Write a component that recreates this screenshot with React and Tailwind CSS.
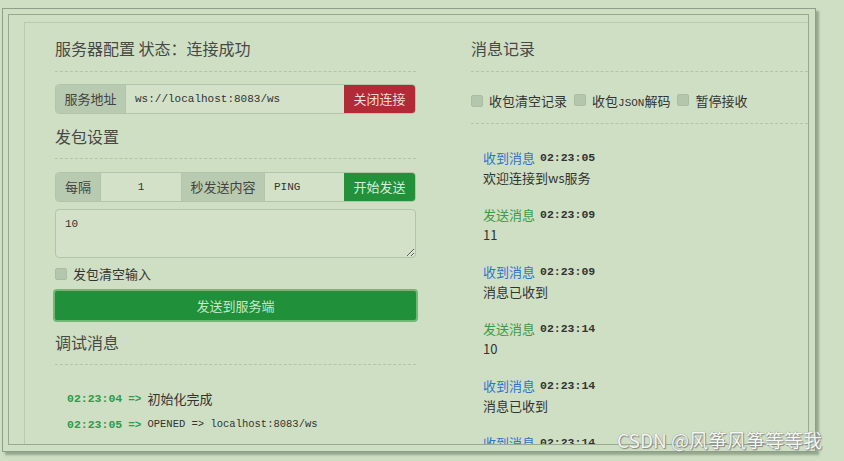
import React from "react";

const cjk = "font-['Noto_Sans_CJK_SC',sans-serif]";
const mono = "font-['Liberation_Mono','Noto_Sans_CJK_SC',monospace]";

function Box() {
  return <span className="inline-block w-[12px] h-[12px] rounded-[2px] bg-[#b4c7ad] border border-[#a9bda2]" />;
}

const messages = [
  { type: "recv", time: "02:23:05", text: "欢迎连接到ws服务" },
  { type: "send", time: "02:23:09", text: "11" },
  { type: "recv", time: "02:23:09", text: "消息已收到" },
  { type: "send", time: "02:23:14", text: "10" },
  { type: "recv", time: "02:23:14", text: "消息已收到" },
  { type: "recv", time: "02:23:14", text: "消息已收到" },
];

export default function App() {
  return (
    <div className={`relative w-[844px] h-[461px] overflow-hidden bg-[#cfdfc4] text-[#3a3a3a] ${cjk}`}>
      <div className="ml-[2px] mt-[8px] w-[814px] h-[444px] border border-[#8d9e89] shadow-[3px_3px_2px_rgba(110,130,105,0.6)] pt-[5px] pl-[5px] pr-[6px] pb-[6px]">
        <div className="h-full border border-[#97a993] pt-[7px] pl-[15px] flex flex-col">
          <div className="flex-1 min-h-0 border-l border-t border-[#b8caaf] flex pl-[30px] overflow-hidden">
            {/* Left column */}
            <div className="w-[361px] shrink-0 pt-[14px] flex flex-col">
              <div className="h-[22px] leading-[22px] text-[16px] text-[#484848]">服务器配置 状态：连接成功</div>
              <div className="mt-[12px] border-t border-dashed border-[#b3c4ab]" />
              <div className="mt-[12px] h-[30px] flex rounded-[4px] border border-[#b2c4aa] overflow-hidden">
                <div className="w-[70px] bg-[#b8cab0] border-r border-[#b2c4aa] flex items-center justify-center text-[13px] text-[#444]">服务地址</div>
                <div className={`flex-1 flex items-center pl-[9px] text-[11px] text-[#333] bg-[#d2e1c8] ${mono}`}>ws://localhost:8083/ws</div>
                <div className="w-[71px] bg-[#b32a37] flex items-center justify-center text-[13px] text-[#f4d9da]">关闭连接</div>
              </div>
              <div className="mt-[11px] h-[22px] leading-[22px] text-[16px] text-[#484848]">发包设置</div>
              <div className="mt-[11px] border-t border-dashed border-[#b3c4ab]" />
              <div className="mt-[13px] h-[30px] flex rounded-[4px] border border-[#b2c4aa] overflow-hidden">
                <div className="w-[45px] bg-[#b8cab0] border-r border-[#b2c4aa] flex items-center justify-center text-[13px] text-[#444]">每隔</div>
                <div className={`w-[80px] flex items-center justify-center text-[11px] text-[#333] bg-[#d2e1c8] ${mono}`}>1</div>
                <div className="w-[84px] bg-[#b8cab0] border-x border-[#b2c4aa] flex items-center justify-center text-[13px] text-[#444]">秒发送内容</div>
                <div className={`flex-1 flex items-center pl-[9px] text-[11px] text-[#333] bg-[#d2e1c8] ${mono}`}>PING</div>
                <div className="w-[71px] bg-[#22913a] flex items-center justify-center text-[13px] text-[#d6efd8]">开始发送</div>
              </div>
              <textarea
                readOnly
                defaultValue="10"
                className={`mt-[7px] h-[49px] w-full rounded-[4px] border border-[#b2c4aa] bg-[#d2e1c8] px-[9px] py-[7px] text-[11px] leading-[14px] text-[#333] outline-none ${mono}`}
              />
              <div className="mt-[8px] h-[16px] flex items-center gap-[6px] text-[13px] text-[#333]">
                <Box />
                <span>发包清空输入</span>
              </div>
              <div className="mt-[7px] -mx-[2px] h-[33px] rounded-[4px] border-2 border-[#72b874] bg-[#20903a] flex items-center justify-center text-[13px] text-[#c9e7cb]">发送到服务端</div>
              <div className="mt-[9px] h-[22px] leading-[22px] text-[16px] text-[#484848]">调试消息</div>
              <div className="mt-[11px] border-t border-dashed border-[#b3c4ab]" />
              <div className="mt-[24px] pl-[12px] flex flex-col gap-[6px]">
                <div className="h-[20px] flex items-center gap-[6px]">
                  <span className={`text-[11.5px] font-bold text-[#2f9a4a] ${mono}`}>02:23:04</span>
                  <span className={`text-[11px] font-bold text-[#2f9a4a] ${mono}`}>=&gt;</span>
                  <span className="text-[13px] text-[#333]">初始化完成</span>
                </div>
                <div className="h-[20px] flex items-center gap-[6px]">
                  <span className={`text-[11.5px] font-bold text-[#2f9a4a] ${mono}`}>02:23:05</span>
                  <span className={`text-[11px] font-bold text-[#2f9a4a] ${mono}`}>=&gt;</span>
                  <span className={`text-[10.5px] text-[#333] ${mono}`}>OPENED =&gt; localhost:8083/ws</span>
                </div>
              </div>
            </div>

            {/* Right column */}
            <div className="ml-[55px] flex-1 min-w-0 pt-[14px] flex flex-col">
              <div className="h-[22px] leading-[22px] text-[16px] text-[#484848]">消息记录</div>
              <div className="mt-[12px] border-t border-dashed border-[#b3c4ab]" />
              <div className="mt-[21px] h-[16px] flex items-center text-[13px] text-[#333]">
                <Box />
                <span className="ml-[6px]">收包清空记录</span>
                <span className="ml-[7px]"><Box /></span>
                <span className="ml-[6px]">收包<span className={`text-[11px] ${mono}`}>JSON</span>解码</span>
                <span className="ml-[7px]"><Box /></span>
                <span className="ml-[6px]">暂停接收</span>
              </div>
              <div className="mt-[14px] border-t border-dashed border-[#b3c4ab]" />
              <div className="mt-[24px] pl-[12px] flex flex-col">
                {messages.map((m, i) => (
                  <div key={i} className="mb-[17px]">
                    <div className="h-[20px] flex items-center gap-[5px]">
                      <span className={`text-[13px] ${m.type === "recv" ? "text-[#2f74cc]" : "text-[#3b9b45]"}`}>
                        {m.type === "recv" ? "收到消息" : "发送消息"}
                      </span>
                      <span className={`text-[11.5px] font-bold text-[#333] ${mono}`}>{m.time}</span>
                    </div>
                    <div className="h-[20px] flex items-center text-[13px] text-[#333]">{m.text}</div>
                  </div>
                ))}
              </div>
            </div>
          </div>
        </div>
      </div>
      <div className="absolute left-[617px] top-[427px] text-[19px] leading-[26px] text-[#f4f7f2] [text-shadow:0_0_1px_#777,1px_1px_1px_#888] font-['Noto_Sans_CJK_SC',sans-serif]">
        CSDN @风筝风筝等等我
      </div>
    </div>
  );
}
